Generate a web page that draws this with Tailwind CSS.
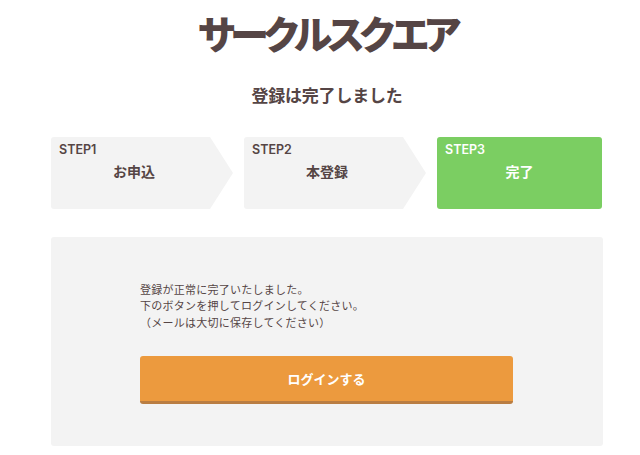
<!DOCTYPE html>
<html lang="ja">
<head>
<meta charset="utf-8">
<script src="https://cdn.jsdelivr.net/npm/@tailwindcss/browser@4"></script>
</head>
<body class="bg-white text-[#554545] font-['Noto_Sans_CJK_JP',sans-serif] w-[640px] h-[455px] overflow-hidden">
  <header class="h-[68px] flex justify-center items-start pl-[13px]">
    <h1 class="text-[39px] leading-[64px] font-black tracking-[-6.6px] text-[#554545] whitespace-nowrap">サークルスクエア</h1>
  </header>
  <h2 class="text-center text-[17px] leading-[24px] font-bold tracking-[-0.2px] mt-[15px] ml-[14px]">登録は完了しました</h2>
  <ol class="flex gap-[11px] ml-[51px] mt-[30px] w-[551px] h-[72px]">
    <li class="flex w-[182px]">
      <div class="w-[159px] bg-[#f3f3f3] rounded-l-[3px] relative">
        <div class="font-['Inter',sans-serif] text-[12.5px] leading-[14px] font-semibold pl-[8px] pt-[6px]">STEP1</div>
        <div class="text-[14px] leading-[20px] font-bold text-center pl-[7px] mt-[4px]">お申込</div>
      </div>
      <div class="w-[23px] bg-[#f3f3f3] [clip-path:polygon(0_0,100%_50%,0_100%)]"></div>
    </li>
    <li class="flex w-[182px]">
      <div class="w-[159px] bg-[#f3f3f3] rounded-l-[3px] relative">
        <div class="font-['Inter',sans-serif] text-[12.5px] leading-[14px] font-semibold pl-[8px] pt-[6px]">STEP2</div>
        <div class="text-[14px] leading-[20px] font-bold text-center pl-[7px] mt-[4px]">本登録</div>
      </div>
      <div class="w-[23px] bg-[#f3f3f3] [clip-path:polygon(0_0,100%_50%,0_100%)]"></div>
    </li>
    <li class="w-[165px] bg-[#7bce62] rounded-[3px] text-white">
      <div class="font-['Inter',sans-serif] text-[12.5px] leading-[14px] font-semibold pl-[8px] pt-[6px]">STEP3</div>
      <div class="text-[14px] leading-[20px] font-bold text-center mt-[4px]">完了</div>
    </li>
  </ol>
  <main class="ml-[51px] mt-[28px] w-[552px] h-[209px] bg-[#f3f3f3] rounded-[3px] pl-[89px] pt-[44px]">
    <p class="text-[11px] leading-[16.4px] tracking-[0.25px] text-[#554545]">登録が正常に完了いたしました。<br>下のボタンを押してログインしてください。<br>（メールは大切に保存してください）</p>
    <button class="mt-[26px] block w-[373px] h-[48px] bg-[#ec9a3e] border-b-[3px] border-[#b97d42] rounded-[3px] text-white text-[13px] font-bold">ログインする</button>
  </main>
</body>
</html>
